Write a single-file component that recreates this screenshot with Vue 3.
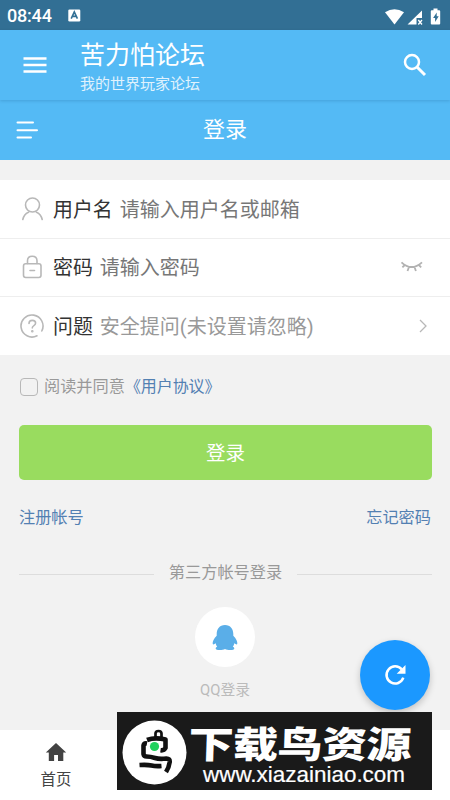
<script setup>
const fields = [
  { id: 'user', label: '用户名', hint: '请输入用户名或邮箱' },
  { id: 'lock', label: '密码', hint: '请输入密码' },
  { id: 'help', label: '问题', hint: '安全提问(未设置请忽略)' }
]
</script>

<template>
  <div class="screen">
    <header class="status">
      <span class="clock">08:44</span>
      <svg class="badge" width="13" height="13" viewBox="0 0 13 13">
        <rect x=".3" y=".5" width="12" height="12" rx="1.2" fill="#fff" />
        <path d="M3.2 9.7 6.3 3l3.1 6.7M4.5 7.4h3.7" fill="none" stroke="#326f94" stroke-width="1.6" />
      </svg>
      <svg class="signals" width="60" height="20" viewBox="0 0 60 20">
        <path d="M1 5.3Q10.500-.7 20 5.300L10.500 17.600Z" fill="#fff" />
        <path d="M38 3.500V11H32.500V17.600H23.500Z" fill="#fff" />
        <path d="m34.300 13 3.700 4.500m0-4.500-3.700 4.500" stroke="#fff" stroke-width="1.300" />
        <path d="M49.500 1.500h4v1.700h1.700q1 0 1 1v12.400q0 1-1 1h-7.400q-1 0-1-1V4.200q0-1 1-1h1.700Z" fill="#fff" />
        <path d="m52.700 5.500-3.600 5.600h2v4l3.600-5.800h-2Z" fill="#326f94" />
      </svg>
    </header>

    <div class="appbar">
      <svg class="menu" width="24" height="18" viewBox="0 0 24 18">
        <path d="M.5 2.500h23M.5 9h23M.5 15.500h23" stroke="#fff" stroke-width="2.400" />
      </svg>
      <div class="titles">
        <h1>苦力怕论坛</h1>
        <p>我的世界玩家论坛</p>
      </div>
      <svg class="search" width="24" height="24" viewBox="0 0 24 24">
        <circle cx="9" cy="9" r="7" fill="none" stroke="#fff" stroke-width="2.500" />
        <path d="m14 14 8 8" stroke="#fff" stroke-width="3" />
      </svg>
    </div>

    <div class="subbar">
      <svg width="22" height="20" viewBox="0 0 22 20">
        <path d="M1.500 2.500h15.500M1.500 10.300h19.500M1.500 17.500h13.500" stroke="#fff" stroke-width="2" stroke-linecap="round" />
      </svg>
      <h2>登录</h2>
    </div>

    <main>
      <section class="fields">
        <div v-for="f in fields" :key="f.id" class="field">
          <svg class="lead" width="24" height="26" viewBox="0 0 24 26" fill="none" stroke="#b8b8b8" stroke-width="1.600" stroke-linecap="round">
            <template v-if="f.id === 'user'">
              <circle cx="12.500" cy="9" r="7" />
              <path d="M2.800 23.500q1.200-5.500 5.700-7.300M16.500 16.200q4.500 1.800 5.700 7.300" />
            </template>
            <template v-else-if="f.id === 'lock'">
              <rect x="3.500" y="9.800" width="17.500" height="13.700" rx="2.200" />
              <path d="M7.500 9.500V6.800q0-4.500 4.700-4.500T17 6.800v2.700M10 16.500h4.500" />
            </template>
            <template v-else>
              <path d="M17 22.800A11 11 0 1 1 21.800 18" />
              <path d="M9 10.400q0-3 3.300-3t3.300 2.700q0 1.500-1.700 2.500t-1.600 2.300" />
              <circle cx="12.300" cy="18.200" r=".5" fill="#b8b8b8" />
            </template>
          </svg>
          <label>{{ f.label }}</label>
          <span class="hint" :class="{ pale: f.id === 'help' }">{{ f.hint }}</span>
          <svg v-if="f.id === 'lock'" class="eye" width="24" height="14" viewBox="0 0 24 14" fill="none" stroke="#b2b2b2" stroke-width="1.800">
            <path d="M1.500 2.300q10 9.500 20.500 0M4.700 5 2.400 7.300M9 7l-1.500 4M14.500 7l1.400 4M18.800 5l2.400 2.300" />
          </svg>
          <svg v-if="f.id === 'help'" class="chevron" width="10" height="16" viewBox="0 0 10 16">
            <path d="m2 2 6 6-6 6" fill="none" stroke="#b8b8b8" stroke-width="1.300" />
          </svg>
        </div>
      </section>

      <div class="agree">
        <i class="box"></i>
        <span>阅读并同意</span><a>《用户协议》</a>
      </div>
      <button class="submit">登录</button>
      <div class="links"><a>注册帐号</a><a>忘记密码</a></div>
      <div class="divider"><span>第三方帐号登录</span></div>
      <div class="qq">
        <div class="disc">
          <svg width="26" height="27" viewBox="0 0 26 27">
            <path d="M13 1C7.500 1 4.700 5 4.700 10v1.700C2 14.500.3 17.500.7 19.800c.2 1 1.500.8 3-.5.2 1.500.8 2.600 1.500 3.500-1.600.6-2 2.100-.9 2.700 2 .9 6.700.7 8.700-.5 2 1.200 6.700 1.400 8.700.5 1.100-.6.700-2.100-.9-2.700.7-.9 1.300-2 1.500-3.500 1.500 1.300 2.800 1.500 3 .5.400-2.300-1.300-5.300-4-8.100V10C21.300 5 18.500 1 13 1Z" fill="#5aaee8" />
          </svg>
        </div>
        <span>QQ登录</span>
      </div>
    </main>

    <nav>
      <div class="tab">
        <svg width="22" height="20" viewBox="0 0 22 20">
          <path d="M11 1 .8 10.500h3V19h5.300v-6h3.900v6h5.300v-8.500h2.900Z" fill="#424242" />
        </svg>
        <span>首页</span>
      </div>
    </nav>

    <button class="fab">
      <svg width="24" height="24" viewBox="0 0 24 24">
        <path d="M20.300 14.700A8.600 8.600 0 1 1 18.800 6.500" fill="none" stroke="#fff" stroke-width="2.500" />
        <path d="M22.500 2v8.800h-8.800Z" fill="#fff" />
      </svg>
    </button>

    <div class="banner">
      <svg width="315" height="78" viewBox="0 0 315 78">
        <circle cx="37.500" cy="40.500" r="32" fill="#fff" />
        <g fill="none" stroke="#111" stroke-width="4.600" stroke-linejoin="round">
          <path d="M38.500 25v-3.500q0-2.500 3-2.500t3 2.500v4" stroke-width="2.700" />
          <path d="M30 28q8-3 18.500-.5v8.500q-1.500 2.800-5 2.300" />
          <path d="M30 31.500q-3-.5-3.500 2v8.500q.5 2.500 3 2.500 4 0 8.500 1.500t11.500.5q3.500 0 3.200 3.500-.7 5.500-3.700 10" />
          <path d="M22.500 53q8-.5 12 .5t10 .5" />
        </g>
        <circle cx="37.500" cy="34.500" r="4.600" fill="#20d15d" />
        <text class="brand" transform="translate(71 45.500) skewX(-2) scale(1.220 1)" textLength="183">下载鸟资源</text>
        <text class="site" x="86" y="70" textLength="202" lengthAdjust="spacingAndGlyphs">www.xiazainiao.com</text>
      </svg>
    </div>
  </div>
</template>

<style>
body { margin: 0; }
</style>

<style scoped>
* { box-sizing: border-box; }
.screen {
  position: relative;
  display: flex;
  flex-direction: column;
  width: 450px;
  height: 800px;
  overflow: hidden;
  background: #f2f2f2;
  font-family: Roboto, "Noto Sans CJK SC", sans-serif;
}
svg { display: block; flex: none; }
h1, h2, p { margin: 0; font-weight: 400; }
button { border: 0; padding: 0; font-family: inherit; }
.status {
  display: flex;
  align-items: center;
  height: 30px;
  padding: 0 6px 0 7px;
  background: #326f94;
  color: #fff;
}
.clock { font-size: 18px; font-weight: 500; line-height: 30px; width: 61px; padding-top: 2px; letter-spacing: -.2px; }
.signals { margin-left: auto; margin-top: 3px; }
.appbar {
  z-index: 1;
  display: flex;
  align-items: center;
  height: 70px;
  padding: 0 23px;
  background: #54baf5;
  color: #fff;
  box-shadow: 0 1px 3px rgba(0, 50, 90, .18);
}
.titles { margin-left: 33px; padding-top: 5px; }
.titles h1 { font-size: 25px; line-height: 30px; }
.titles p { font-size: 15px; line-height: 22px; margin-top: 2px; opacity: .82; }
.search { margin-left: auto; }
.subbar {
  display: grid;
  grid-template-columns: 22px 1fr 22px;
  align-items: center;
  height: 60px;
  padding: 0 16px;
  background: #54baf5;
  color: #fff;
}
.subbar h2 { text-align: center; font-size: 22px; line-height: 30px; }
main { flex: 1; }
.fields { margin-top: 20px; background: #fff; }
.field {
  display: flex;
  align-items: center;
  height: 58.500px;
  padding: 0 20px;
  border-bottom: 1px solid #eee;
  font-size: 19.900px;
}
.field:last-child { height: 58px; border: 0; }
.field label { margin-left: 9px; color: #333; }
.field label, .hint { margin-top: -1px; }
.hint { margin-left: 7px; color: #777; font-size: 20px; }
.pale { color: #999; }
.eye { margin-left: auto; margin-right: 6px; }
.chevron { margin-left: auto; margin-right: 2px; }
.agree {
  display: flex;
  align-items: center;
  height: 24px;
  margin-top: 20px;
  padding-left: 20px;
  font-size: 16.200px;
  line-height: 20px;
  color: #999;
}
.agree a { font-size: 16px; letter-spacing: -.1px; }
.box { width: 18px; height: 18px; margin-right: 6px; border: 1.500px solid #b8b8b8; border-radius: 4px; }
a { color: #5380b2; }
.submit {
  display: block;
  width: 413px;
  height: 55px;
  margin: 26px 0 0 19px;
  padding-bottom: 3px;
  border-radius: 5px;
  background: #99dc5f;
  color: #fff;
  font-size: 19.500px;
}
.links {
  display: flex;
  justify-content: space-between;
  margin-top: 25px;
  padding: 0 19px;
  font-size: 16.200px;
  line-height: 26px;
}
.divider {
  display: flex;
  align-items: center;
  gap: 15px;
  margin-top: 29px;
  padding: 0 18px 0 19px;
  color: #999;
  font-size: 16.200px;
  line-height: 26px;
}
.divider::before, .divider::after { content: ""; flex: 1; height: 1px; margin-top: 3px; background: #ddd; }
.qq { display: flex; flex-direction: column; align-items: center; margin-top: 21px; color: #bbb; font-size: 14.800px; line-height: 22px; }
.disc { display: grid; place-items: center; width: 60px; height: 60px; margin-bottom: 12px; border-radius: 50%; background: #fff; }
nav { display: flex; height: 70px; background: #fff; }
.tab { display: flex; flex-direction: column; align-items: center; width: 112px; padding-top: 12px; color: #444; font-size: 15.400px; line-height: 22px; gap: 7px; }
.fab {
  position: absolute;
  left: 360px;
  top: 640px;
  display: grid;
  place-items: center;
  width: 70px;
  height: 70px;
  border-radius: 50%;
  background: #1b98ff;
  box-shadow: 0 3px 7px rgba(0, 0, 0, .2);
}
.banner { position: absolute; left: 117px; top: 712px; width: 315px; height: 78px; background: #1a1a1a; }
.brand { font: 900 37px "Noto Sans CJK SC", sans-serif; fill: #fff; }
.site { font: 21.500px "Liberation Sans", sans-serif; fill: #fff; stroke: #fff; stroke-width: .2px; }
</style>
